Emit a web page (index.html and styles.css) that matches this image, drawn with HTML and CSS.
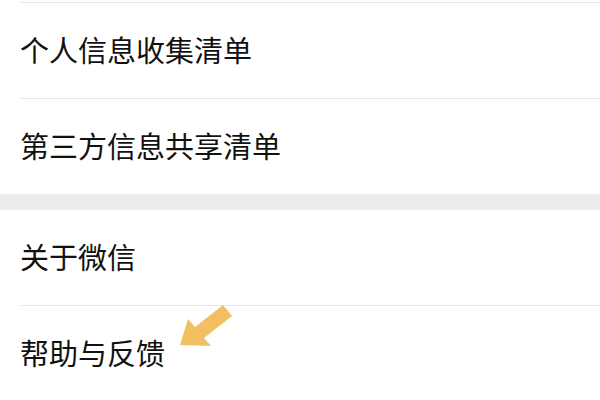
FILE: index.html
```html
<!DOCTYPE html>
<html lang="zh-CN">
<head>
  <meta charset="UTF-8" />
  <meta name="viewport" content="width=device-width, initial-scale=1" />
  <title>设置</title>
  <link rel="stylesheet" href="styles.css">
</head>
<body>

  <div class="settings">
    <ul class="group">
      <li class="item">个人信息收集清单</li>
      <li class="item">第三方信息共享清单</li>
    </ul>
    <ul class="group">
      <li class="item">关于微信</li>
      <li class="item help">
        帮助与反馈
        <svg class="arrow" width="70" height="55" viewBox="0 0 70 55">
          <polygon points="10,48 18,22 25,30 53,8 62,19 34,41 41,49" fill="#f2c063" />
        </svg>
      </li>
    </ul>
  </div>

</body>
</html>
```

FILE: styles.css
```css
body {
  margin: 0;
  background: #fff;
  font-family: "Noto Sans CJK SC", "Noto Sans", sans-serif;
  color: #111;
}
.settings {
  padding-top: 2px;
}
.group {
  list-style: none;
  margin: 0;
  padding: 0 0 0 20px;
  background: #fff;
}
.group + .group {
  border-top: 16px solid #ededed;
}
.item {
  height: 96px;
  box-sizing: border-box;
  padding-bottom: 4px;
  display: flex;
  align-items: center;
  font-size: 29px;
  border-top: 1px solid #e6e6e6;
}
.group + .group .item:first-child {
  border-top: none;
  height: 95px;
}
.group:first-child .item:first-child {
  border-top: 1px solid #e6e6e6;
}
.help {
  position: relative;
}
.arrow {
  position: absolute;
  left: 150px;
  top: -9px;
}
```
